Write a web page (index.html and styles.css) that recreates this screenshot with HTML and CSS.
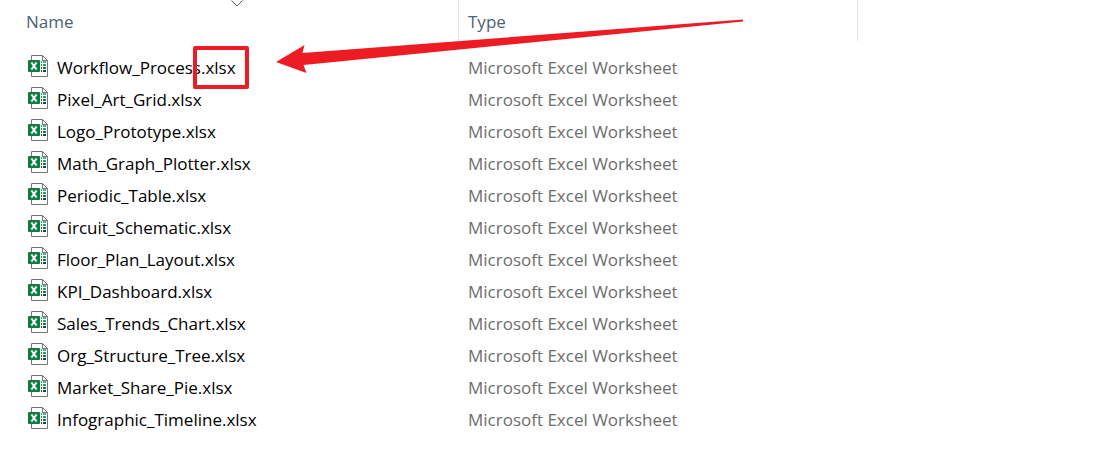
FILE: index.html
```html
<!DOCTYPE html>
<html lang="en">
<head>
    <meta charset="UTF-8">
    <meta name="viewport" content="width=device-width, initial-scale=1.0">
    <title>Excel files</title>
    <link rel="stylesheet" href="styles.css">
</head>
<body>
    <!-- Shared file icon -->
    <svg class="icon-defs" aria-hidden="true">
        <symbol id="xlsx" viewBox="0 0 20 22">
            <path d="M3.5 .5H14.5L19.5 5.5V21.5H3.5Z" fill="#fff" stroke="#737373"/>
            <path d="M14.5 .5V5.5H19.5" fill="none" stroke="#737373"/>
            <path d="M13 7h1M15 7h3" stroke="#33c481" stroke-width="2"/>
            <path d="M13 10h1M15 10h3" stroke="#21a366" stroke-width="2"/>
            <path d="M13 13h1M15 13h3" stroke="#107c41" stroke-width="2"/>
            <path d="M13 16h1M15 16h3" stroke="#134a2c" stroke-width="2"/>
            <rect y="5" width="12" height="12" rx="1" fill="#107c41"/>
            <path d="M3.5 7.5L8.5 14.5M8.5 7.5L3.5 14.5" stroke="#fff" stroke-width="2"/>
        </symbol>
    </svg>

    <main class="file-list">
        <table class="files">
            <colgroup>
                <col class="col-name">
                <col class="col-type">
                <col>
            </colgroup>
            <thead>
                <tr>
                    <th scope="col" aria-sort="descending">
                        Name
                        <svg class="sort-arrow" viewBox="0 0 12 7" aria-hidden="true"><path d="M.5 .5L6 6L11.5 .5" fill="none" stroke="#5c5c5c"/></svg>
                    </th>
                    <th scope="col">Type</th>
                    <td></td>
                </tr>
            </thead>
            <tbody>
                <tr>
                    <td><div class="file"><svg class="icon"><use href="#xlsx"/></svg><span>Workflow_Process<span class="marked">.xlsx</span></span></div></td>
                    <td>Microsoft Excel Worksheet</td>
                </tr>
                <tr>
                    <td><div class="file"><svg class="icon"><use href="#xlsx"/></svg>Pixel_Art_Grid.xlsx</div></td>
                    <td>Microsoft Excel Worksheet</td>
                </tr>
                <tr>
                    <td><div class="file"><svg class="icon"><use href="#xlsx"/></svg>Logo_Prototype.xlsx</div></td>
                    <td>Microsoft Excel Worksheet</td>
                </tr>
                <tr>
                    <td><div class="file"><svg class="icon"><use href="#xlsx"/></svg>Math_Graph_Plotter.xlsx</div></td>
                    <td>Microsoft Excel Worksheet</td>
                </tr>
                <tr>
                    <td><div class="file"><svg class="icon"><use href="#xlsx"/></svg>Periodic_Table.xlsx</div></td>
                    <td>Microsoft Excel Worksheet</td>
                </tr>
                <tr>
                    <td><div class="file"><svg class="icon"><use href="#xlsx"/></svg>Circuit_Schematic.xlsx</div></td>
                    <td>Microsoft Excel Worksheet</td>
                </tr>
                <tr>
                    <td><div class="file"><svg class="icon"><use href="#xlsx"/></svg>Floor_Plan_Layout.xlsx</div></td>
                    <td>Microsoft Excel Worksheet</td>
                </tr>
                <tr>
                    <td><div class="file"><svg class="icon"><use href="#xlsx"/></svg>KPI_Dashboard.xlsx</div></td>
                    <td>Microsoft Excel Worksheet</td>
                </tr>
                <tr>
                    <td><div class="file"><svg class="icon"><use href="#xlsx"/></svg>Sales_Trends_Chart.xlsx</div></td>
                    <td>Microsoft Excel Worksheet</td>
                </tr>
                <tr>
                    <td><div class="file"><svg class="icon"><use href="#xlsx"/></svg>Org_Structure_Tree.xlsx</div></td>
                    <td>Microsoft Excel Worksheet</td>
                </tr>
                <tr>
                    <td><div class="file"><svg class="icon"><use href="#xlsx"/></svg>Market_Share_Pie.xlsx</div></td>
                    <td>Microsoft Excel Worksheet</td>
                </tr>
                <tr>
                    <td><div class="file"><svg class="icon"><use href="#xlsx"/></svg>Infographic_Timeline.xlsx</div></td>
                    <td>Microsoft Excel Worksheet</td>
                </tr>
            </tbody>
        </table>

        <!-- Arrow pointing at the extension -->
        <svg class="pointer" viewBox="0 0 467 54" aria-hidden="true">
            <path d="M0 43L28.5 26L26.5 34L467 .5V2.5L27.5 46L30.5 54Z" fill="#ed1c24"/>
        </svg>
    </main>
</body>
</html>
```
FILE: styles.css
```css
*,
*::before,
*::after {
    box-sizing: border-box;
}

body {
    margin: 0;
    background: #fff;
    color: #000;
    font-family: "Segoe UI", "Open Sans", "Noto Sans", sans-serif;
    font-size: 17px;
    line-height: 24px;
}

.icon-defs {
    position: absolute;
    width: 0;
    height: 0;
}

.file-list {
    position: relative;
}

.files {
    width: 100%;
    table-layout: fixed;
    border-collapse: separate;
    border-spacing: 0;
    white-space: nowrap;
}

.col-name {
    width: 459px;
}

.col-type {
    width: 399px;
}

.files th {
    position: relative;
    height: 41px;
    padding: 2px 9px 0;
    border-right: 1px solid #e5e5e5;
    color: #4c607a;
    font-weight: normal;
    text-align: left;
}

.files th:first-child {
    padding-left: 26px;
}

.sort-arrow {
    position: absolute;
    top: 0;
    left: 50%;
    width: 12px;
    height: 7px;
    margin-left: 2px;
}

/* space between the header and the first row */
.files tbody::before {
    content: "";
    display: block;
    height: 11px;
}

.files tbody td {
    height: 32px;
    padding: 0 9px;
    color: #6d6d6d;
}

.files tbody td:first-child {
    padding-left: 28px;
    color: #000;
}

.file {
    display: flex;
    align-items: center;
    gap: 9px;
}

.icon {
    width: 20px;
    height: 22px;
    margin-bottom: 4px;
}

.marked {
    position: relative;
}

.marked::after {
    content: "";
    position: absolute;
    top: -10px;
    right: -13px;
    width: 56px;
    height: 43px;
    border: 4px solid #ed1c24;
    border-radius: 2px;
}

.pointer {
    position: absolute;
    top: 19px;
    left: 276px;
    width: 467px;
    height: 54px;
}
```
